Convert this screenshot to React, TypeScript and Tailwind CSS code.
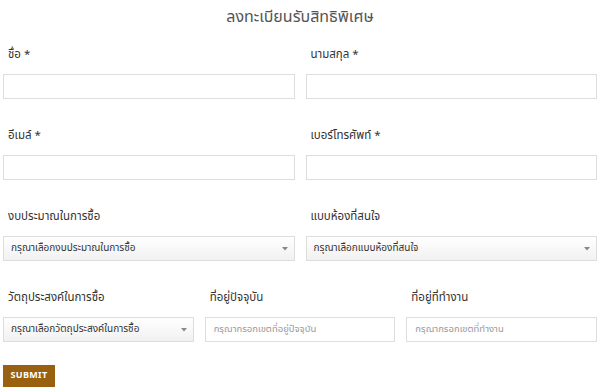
const font = { fontFamily: '"Noto Sans Thai", "Noto Sans", sans-serif' };

function Label({ children }: { children: React.ReactNode }) {
  return <div className="h-[20px] pl-[5px] text-[11.5px] leading-[23px] text-[#333]">{children}</div>;
}

function TextInput({ placeholder }: { placeholder?: string }) {
  return (
    <div className="flex h-[25px] items-center border border-[#ddd] bg-white px-[8px] text-[9.5px] text-[#999]">
      {placeholder}
    </div>
  );
}

function Select({ value }: { value: string }) {
  return (
    <div className="flex h-[25px] items-center justify-between border border-[#ddd] bg-gradient-to-b from-white to-[#f1f1f1] pl-[7px] pr-[6px] text-[10px] text-[#333]">
      <span>{value}</span>
      <svg width="6" height="4" viewBox="0 0 6 4">
        <path d="M0 0 L6 0 L3 3.5 Z" fill="#888" />
      </svg>
    </div>
  );
}

function Field({ label, children }: { label: string; children: React.ReactNode }) {
  return (
    <div className="flex flex-col gap-[11px]">
      <Label>{label}</Label>
      {children}
    </div>
  );
}

export default function App() {
  return (
    <div className="h-[392px] w-[600px] bg-white px-[3px]" style={font}>
      <h1 className="pt-[5px] text-center text-[16px] leading-[24px] text-[#555]">ลงทะเบียนรับสิทธิพิเศษ</h1>

      <div className="mt-[14px] grid grid-cols-2 gap-x-[11px] gap-y-[25px]">
        <Field label="ชื่อ *">
          <TextInput />
        </Field>
        <Field label="นามสกุล *">
          <TextInput />
        </Field>
        <Field label="อีเมล์ *">
          <TextInput />
        </Field>
        <Field label="เบอร์โทรศัพท์ *">
          <TextInput />
        </Field>
        <Field label="งบประมาณในการซื้อ">
          <Select value="กรุณาเลือกงบประมาณในการซื้อ" />
        </Field>
        <Field label="แบบห้องที่สนใจ">
          <Select value="กรุณาเลือกแบบห้องที่สนใจ" />
        </Field>
      </div>

      <div className="mt-[25px] grid grid-cols-3 gap-x-[11px]">
        <Field label="วัตถุประสงค์ในการซื้อ">
          <Select value="กรุณาเลือกวัตถุประสงค์ในการซื้อ" />
        </Field>
        <Field label="ที่อยู่ปัจจุบัน">
          <TextInput placeholder="กรุณากรอกเขตที่อยู่ปัจจุบัน" />
        </Field>
        <Field label="ที่อยู่ที่ทำงาน">
          <TextInput placeholder="กรุณากรอกเขตที่ทำงาน" />
        </Field>
      </div>

      <button className="mt-[23px] h-[22px] w-[52px] bg-[#98600f] text-[9px] font-bold tracking-[0.3px] text-white">
        SUBMIT
      </button>
    </div>
  );
}
